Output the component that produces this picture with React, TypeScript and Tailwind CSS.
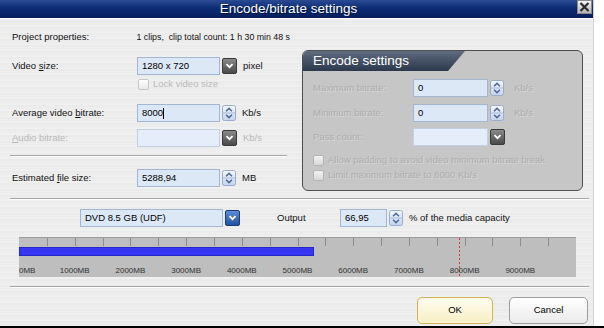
import React from "react";

function Spin() {
  return (
    <svg width="14" height="16" viewBox="0 0 14 16" className="shrink-0">
      <defs>
        <linearGradient id="spg" x1="0" y1="0" x2="0" y2="1">
          <stop offset="0" stopColor="#f5f8fd" />
          <stop offset="1" stopColor="#c5d3ea" />
        </linearGradient>
      </defs>
      <rect x="0.5" y="0.5" width="13" height="15" rx="2" fill="url(#spg)" stroke="#97acd0" />
      <line x1="1" y1="8" x2="13" y2="8" stroke="#a9bbd8" />
      <path d="M4 6.2 L7 3.4 L10 6.2" fill="none" stroke="#4c6a9e" strokeWidth="1.5" />
      <path d="M4 9.8 L7 12.6 L10 9.8" fill="none" stroke="#4c6a9e" strokeWidth="1.5" />
    </svg>
  );
}

function Drop({ blue }: { blue?: boolean }) {
  const id = blue ? "dbb" : "dbg";
  return (
    <svg width="15" height="16" viewBox="0 0 15 16" className="shrink-0">
      <defs>
        <linearGradient id={id} x1="0" y1="0" x2="0" y2="1">
          <stop offset="0" stopColor={blue ? "#5f8ed8" : "#8c8c8c"} />
          <stop offset="1" stopColor={blue ? "#1f4f9f" : "#474747"} />
        </linearGradient>
      </defs>
      <rect x="0.5" y="0.5" width="14" height="15" rx="1.5" fill={`url(#${id})`} stroke={blue ? "#1a3c7a" : "#3a3a3a"} />
      <path d="M4.5 6.2 L7.5 9.2 L10.5 6.2" fill="none" stroke="#ffffff" strokeWidth="1.8" />
    </svg>
  );
}

function Field({
  w,
  value,
  kind,
  disabled,
  caret,
}: {
  w: string;
  value?: string;
  kind: "spin" | "drop" | "blue";
  disabled?: boolean;
  caret?: boolean;
}) {
  return (
    <div className="flex items-center h-[18px] gap-[2px] shrink-0">
      <div
        className={`${w} h-[18px] flex items-center pl-[4px] text-[9.5px] text-black border ${
          disabled ? "bg-[#e4edf9] border-[#c2d0e2]" : "bg-[#dde8f7] border-[#a3b7d2]"
        }`}
      >
        {value}
        {caret && <span className="w-px h-[11px] bg-black" />}
      </div>
      {kind === "spin" ? <Spin /> : kind === "blue" ? <Drop blue /> : <Drop />}
    </div>
  );
}

function Check({ dim }: { dim?: boolean }) {
  return (
    <div
      className={`w-[11px] h-[11px] rounded-[2px] border shrink-0 ${
        dim
          ? "border-[#b4b4b4] bg-[linear-gradient(180deg,#f2f2f2,#d8d8d8)]"
          : "border-[#c8c8c8] bg-[linear-gradient(180deg,#ffffff,#e8e8e8)]"
      }`}
    />
  );
}

function Sep({ cls }: { cls: string }) {
  return <div className={`h-0 border-t border-b border-t-[#a6a6a6] border-b-white ${cls}`} />;
}

const SCALE = 557 / 10000;

function Chart() {
  const ticks = Array.from({ length: 19 }, (_, i) => i + 1);
  const labels = Array.from({ length: 10 }, (_, i) => i);
  return (
    <div className="ml-[7px] mt-[10px] w-[557px] h-[40px] relative bg-[#bebebe] border-t border-[#9a9a9a]">
      {ticks.map((k) => (
        <div key={k} className="absolute top-0 w-px h-[8px] bg-[#8c8c8c]" style={{ left: k * 500 * SCALE }} />
      ))}
      <div
        className="absolute left-0 top-[9px] h-[9px] bg-[#3636f2] border border-[#2626c8]"
        style={{ width: 5288.94 * SCALE }}
      />
      <div
        className="absolute top-0 bottom-0 w-px bg-[repeating-linear-gradient(180deg,#d9363e_0px,#d9363e_2px,transparent_2px,transparent_4px)]"
        style={{ left: 7900 * SCALE }}
      />
      {labels.map((i) => (
        <div
          key={i}
          className={`absolute top-[29px] text-[8px] leading-none text-[#333] whitespace-nowrap ${
            i === 0 ? "" : "-translate-x-1/2"
          }`}
          style={{ left: i * 1000 * SCALE }}
        >
          {i * 1000}MB
        </div>
      ))}
    </div>
  );
}

export default function App() {
  const dimLeft = "text-[#b9b9b9]";
  const dimGroup = "text-[#adadad] [text-shadow:1px_1px_0_#d6d6d6]";
  return (
    <div className="w-[604px] h-[328px] bg-white flex flex-col font-['Liberation_Sans',Arial,sans-serif] overflow-hidden">
      <div className="flex-1 flex min-h-0">
        <div className="w-[594px] flex flex-col border-r border-[#d4d4d4]">
          {/* Title bar */}
          <div className="h-[18px] flex bg-[linear-gradient(180deg,#2a4b94_0%,#0d2c74_45%,#061d5c_100%)]">
            <div className="flex-1 flex items-center justify-center text-white text-[13.5px] leading-none [text-shadow:1px_1px_0_#00113a]">
              Encode/bitrate settings
            </div>
            <div className="w-[15px] h-[14px] mr-[1px] bg-[linear-gradient(180deg,#f6f6f6,#b4b4b4)] flex items-center justify-center border border-[#8a8a8a]">
              <svg width="11" height="10" viewBox="0 0 11 10">
                <path d="M1.5 1 L9.5 9 M9.5 1 L1.5 9" stroke="#2a2a2a" strokeWidth="2.2" />
              </svg>
            </div>
          </div>
          <div className="h-px bg-white" />

          {/* Body */}
          <div className="flex-1 flex flex-col pl-[12px] pr-[4px] text-[9.5px] text-[#111] bg-[repeating-linear-gradient(180deg,#ececec_0px,#f3f3f3_1px,#e7e7e7_3px,#efefef_4px,#ebebeb_6px)]">
            <div className="flex items-start gap-[12px]">
              {/* Left column */}
              <div className="w-[278px] flex flex-col">
                <div className="mt-[9px] h-[19px] flex items-center whitespace-nowrap">
                  <div className="w-[125px]">Project properties:</div>
                  <div className="text-[8.8px]">1 clips,&nbsp; clip total count: 1 h 30 min 48 s</div>
                </div>
                <div className="mt-[10px] h-[18px] flex items-center">
                  <div className="w-[125px]">
                    Video <span className="underline">s</span>ize:
                  </div>
                  <Field w="w-[83px]" value="1280 x 720" kind="drop" />
                  <div className="ml-[6px]">pixel</div>
                </div>
                <div className="mt-[4px] h-[11px] flex items-center pl-[126px]">
                  <Check />
                  <div className={`ml-[4px] ${dimLeft}`}>Lock video size</div>
                </div>
                <div className="mt-[14px] h-[18px] flex items-center">
                  <div className="w-[125px]">
                    Average video <span className="underline">b</span>itrate:
                  </div>
                  <Field w="w-[83px]" value="8000" kind="spin" caret />
                  <div className="ml-[6px]">Kb/s</div>
                </div>
                <div className="mt-[7px] h-[18px] flex items-center">
                  <div className={`w-[125px] ${dimLeft}`}>
                    <span className="underline">A</span>udio bitrate:
                  </div>
                  <Field w="w-[83px]" kind="drop" disabled />
                  <div className={`ml-[6px] ${dimLeft}`}>Kb/s</div>
                </div>
                <Sep cls="mt-[8px] -ml-[2px] w-[277px]" />
                <div className="mt-[12px] h-[18px] flex items-center">
                  <div className="w-[125px]">
                    Estimated <span className="underline">f</span>ile size:
                  </div>
                  <Field w="w-[83px]" value="5288,94" kind="spin" />
                  <div className="ml-[6px]">MB</div>
                </div>
              </div>

              {/* Encode settings group */}
              <div className="mt-[31px] w-[281px] h-[141px] rounded-[6px] border border-[#4e4e4e] bg-[#c6c6c6] overflow-hidden flex flex-col">
                <div className="h-[20px] w-[162px] bg-[linear-gradient(180deg,#5f6c80,#2c384b)] [clip-path:polygon(0_0,100%_0,calc(100%-17px)_100%,0_100%)] flex items-center pl-[10px] text-white text-[13.5px] leading-none">
                  Encode settings
                </div>
                <div className="pl-[10px] flex flex-col">
                  <div className="mt-[8px] h-[18px] flex items-center">
                    <div className={`w-[100px] ${dimGroup}`}>Maximum bitrate:</div>
                    <Field w="w-[75px]" value="0" kind="spin" />
                    <div className={`ml-[10px] ${dimGroup}`}>Kb/s</div>
                  </div>
                  <div className="mt-[7px] h-[18px] flex items-center">
                    <div className={`w-[100px] ${dimGroup}`}>Minimum bitrate:</div>
                    <Field w="w-[75px]" value="0" kind="spin" />
                    <div className={`ml-[10px] ${dimGroup}`}>Kb/s</div>
                  </div>
                  <div className="mt-[6px] h-[18px] flex items-center">
                    <div className={`w-[100px] ${dimGroup}`}>Pass count:</div>
                    <Field w="w-[75px]" kind="drop" disabled />
                  </div>
                  <div className="mt-[9px] h-[11px] flex items-center">
                    <Check dim />
                    <div className={`ml-[4px] ${dimGroup}`}>Allow padding to avoid video minimum bitrate break</div>
                  </div>
                  <div className="mt-[4px] h-[11px] flex items-center">
                    <Check dim />
                    <div className={`ml-[4px] ${dimGroup}`}>Limit maximum bitrate to 8000 Kb/s</div>
                  </div>
                </div>
              </div>
            </div>

            <Sep cls="mt-[7px] -ml-[2px]" />

            {/* Media row */}
            <div className="mt-[9px] h-[18px] flex items-center">
              <div className="ml-[68px]">
                <Field w="w-[143px]" value="DVD 8.5 GB (UDF)" kind="blue" />
              </div>
              <div className="ml-[37px] w-[63px]">Output</div>
              <Field w="w-[47px]" value="66,95" kind="spin" />
              <div className="ml-[6px]">% of the media capacity</div>
            </div>

            <Chart />

            <Sep cls="mt-[9px] -ml-[2px]" />

            <div className="mt-[9px] flex justify-end gap-[16px] mr-[1px]">
              <div className="w-[76px] h-[27px] rounded-[5px] border border-[#d2b257] bg-[linear-gradient(180deg,#fffdf2,#f7eec2)] flex items-center justify-center text-[9.5px] text-black shadow-[inset_0_0_0_1px_#fff8dc]">
                OK
              </div>
              <div className="w-[79px] h-[27px] rounded-[5px] border border-[#9e9e9e] bg-[linear-gradient(180deg,#ffffff,#ebebeb)] flex items-center justify-center text-[9.5px] text-black">
                Cancel
              </div>
            </div>
          </div>
        </div>
      </div>
      <div className="h-[2px] bg-black" />
    </div>
  );
}
